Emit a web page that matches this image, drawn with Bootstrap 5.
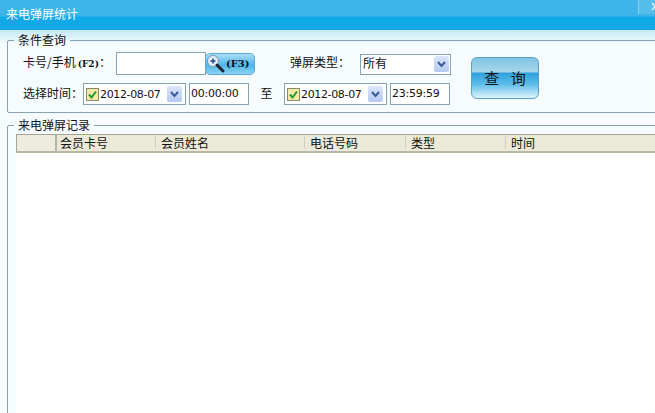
<!DOCTYPE html>
<html lang="zh"><head><meta charset="utf-8"><title>来电弹屏统计</title>
<link rel="stylesheet" href="https://cdn.jsdelivr.net/npm/bootstrap@5.3.0/dist/css/bootstrap.min.css">
<style>
html,body{height:413px;overflow:hidden}
body{background:#f6fbfd;font:12px/14px "Noto Sans CJK SC","Liberation Sans",sans-serif;color:#111}
.titlebar{height:30px;background:linear-gradient(#3fb5e9 0,#3cb4e8 16px,#10a8e6 17px,#13a9e6 100%);color:#fff;padding:7px 0 0 6px;position:relative}
.closebox{position:absolute;right:0;top:0;width:17px;height:14px;background:#55bdea;border-left:1px solid #8fcfe8;overflow:hidden}
.closebox svg{display:block;margin:2px 0 0 12px}
.wash{height:14px;margin-bottom:-14px;background:linear-gradient(#c4e9f6,#f6fbfd)}
.gbox{border:1px solid #87a3b0;border-radius:2px;margin:0 -20px 0 7px;padding:0;min-width:0;position:relative}
.gbox legend{float:none;width:auto;font-size:12px;line-height:14px;padding:0 4px;color:#111}
.qbox{margin-top:3px;height:80px;padding:0 0 0 15px}
.qbox legend{margin:0 0 0 -9px}
.recbox{margin-top:5px;height:300px;padding:0 0 0 8px}
.recbox legend{margin:0 0 0 -2px}
.frow{height:23px;margin-top:5px}
.frow2{margin-top:8px;height:22px}
.lab1{width:93px}.lab2{width:60px}.lab3{width:70px;margin-left:35px}
.lab{white-space:nowrap;padding-bottom:3px}
.frow2 .lab{padding-bottom:2px}
.fkey{font:bold 9px "DejaVu Serif",serif;margin-left:2px}
.ftext{display:block;width:90px;height:23px;border:1px solid #87a3b0;background:#fff}
.pf3{width:50px;height:22px;margin-left:-1px;border-radius:5px;border:1px solid #5aa9d6;background:linear-gradient(#a9dff6,#4fb5e8 55%,#8ad2f2);font:bold 10px "DejaVu Serif",serif;color:#112;padding:0;white-space:nowrap}
.pick{width:91px;height:21px;border:1px solid #87a3b0;background:#fff;padding:0 0 0 2px;margin:1px 0 0 0;font-size:12px}
.pick span{padding-bottom:3px}
.arrow{width:15px;height:16px;background:linear-gradient(#dbe6fb,#b3c9f0);border-radius:2px;margin:0 1px 0 auto;flex:none}
.dbox{width:103px;height:22px;border:1px solid #87a3b0;background:#fff;padding:0 2px 0 2px;font:11px "DejaVu Sans",sans-serif;letter-spacing:-.35px;white-space:nowrap}
.tbox{width:60px;height:22px;margin-left:3px;border:1px solid #87a3b0;background:#fff;padding:0 0 2px 1px;font:11px "DejaVu Sans",sans-serif;letter-spacing:-.25px;white-space:nowrap}
.zhi{width:35px;text-align:center;padding-bottom:2px}
.chk{width:13px;height:13px;flex:none;margin-right:1px}
.gobtn{position:absolute;left:463px;top:10px;width:68px;height:42px;border:1px solid #5aa2c4;border-radius:6px;background:linear-gradient(#7fc5e6 0,#a9d5ea 14px,#2fa0dc 15px,#5cbcea 26px,#def4fc 100%);font-size:15px;letter-spacing:4px;line-height:38px;text-align:center;padding:0 0 0 4px;color:#111}
.ghead{height:19px;margin-top:2px;margin-right:12px;background:#ebe9d8;border-top:1px solid #a5a596;border-bottom:2px solid #b9b8a6;border-left:1px solid #a5a596;font-size:12px;line-height:16px}
.gc0{width:40px;background:#eeecdf;border-right:2px solid #b5b4a4;flex:none}
.gc{flex:none;padding-left:5px;border-right:1px solid #d0cfbf;height:13px;margin-top:1px;line-height:13px}
.gbody{height:270px;background:#fff;margin-right:12px}
</style></head><body>
<div class="titlebar">来电弹屏统计<div class="closebox"><svg width="8" height="9" viewBox="0 0 8 9"><path d="M1 1l6 7M7 1L1 8" stroke="#e4f4fb" stroke-width="1.400" fill="none"/></svg></div></div>
<div class="wash"></div>
<fieldset class="gbox qbox">
  <legend>条件查询</legend>
  <div class="frow d-flex align-items-center">
    <span class="lab lab1">卡号/手机<span class="fkey">(F2)</span>：</span>
    <input class="ftext" type="text" aria-label="卡号">
    <div class="pf3 d-flex align-items-center">
      <svg width="20" height="20" viewBox="0 0 20 20"><circle cx="7" cy="7" r="5.500" fill="#dff1fb" stroke="#7f97a8"/><path d="M4.500 7h5M7 4.500v5" stroke="#1c3f8c" stroke-width="1.400"/><path d="M11 11l6 6" stroke="#223" stroke-width="3" stroke-linecap="round"/></svg>
      <span>(F3)</span>
    </div>
    <span class="lab lab3">弹屏类型：</span>
    <div class="pick d-flex align-items-center"><span>所有</span><svg class="arrow" viewBox="0 0 15 16"><path d="M4 6l3.500 4L11 6" fill="none" stroke="#3a5a98" stroke-width="2"/></svg></div>
  </div>
  <div class="frow2 d-flex align-items-center">
    <span class="lab lab2">选择时间：</span>
    <div class="dbox d-flex align-items-center">
      <svg class="chk" viewBox="0 0 13 13"><rect x=".5" y=".5" width="12" height="12" fill="#f5e9a8" stroke="#8a8a6a"/><path d="M3 6.500l2.500 3L10 3.500" fill="none" stroke="#1d9a2e" stroke-width="2"/></svg>
      <span>2012-08-07</span>
      <svg class="arrow" viewBox="0 0 15 16"><path d="M4 6l3.500 4L11 6" fill="none" stroke="#3a5a98" stroke-width="2"/></svg>
    </div>
    <div class="tbox d-flex align-items-center">00:00:00</div>
    <span class="zhi">至</span>
    <div class="dbox d-flex align-items-center">
      <svg class="chk" viewBox="0 0 13 13"><rect x=".5" y=".5" width="12" height="12" fill="#f5e9a8" stroke="#8a8a6a"/><path d="M3 6.500l2.500 3L10 3.500" fill="none" stroke="#1d9a2e" stroke-width="2"/></svg>
      <span>2012-08-07</span>
      <svg class="arrow" viewBox="0 0 15 16"><path d="M4 6l3.500 4L11 6" fill="none" stroke="#3a5a98" stroke-width="2"/></svg>
    </div>
    <div class="tbox d-flex align-items-center">23:59:59</div>
  </div>
  <button class="gobtn" type="button">查 询</button>
</fieldset>
<fieldset class="gbox recbox">
  <legend>来电弹屏记录</legend>
  <div class="ghead d-flex">
    <div class="gc0"></div>
    <div class="gc" style="width:99px;padding-left:3px">会员卡号</div>
    <div class="gc" style="width:149px">会员姓名</div>
    <div class="gc" style="width:101px;padding-left:5px">电话号码</div>
    <div class="gc" style="width:100px">类型</div>
    <div class="gc border-0" style="width:120px">时间</div>
  </div>
  <div class="gbody"></div>
</fieldset>
</body></html>
